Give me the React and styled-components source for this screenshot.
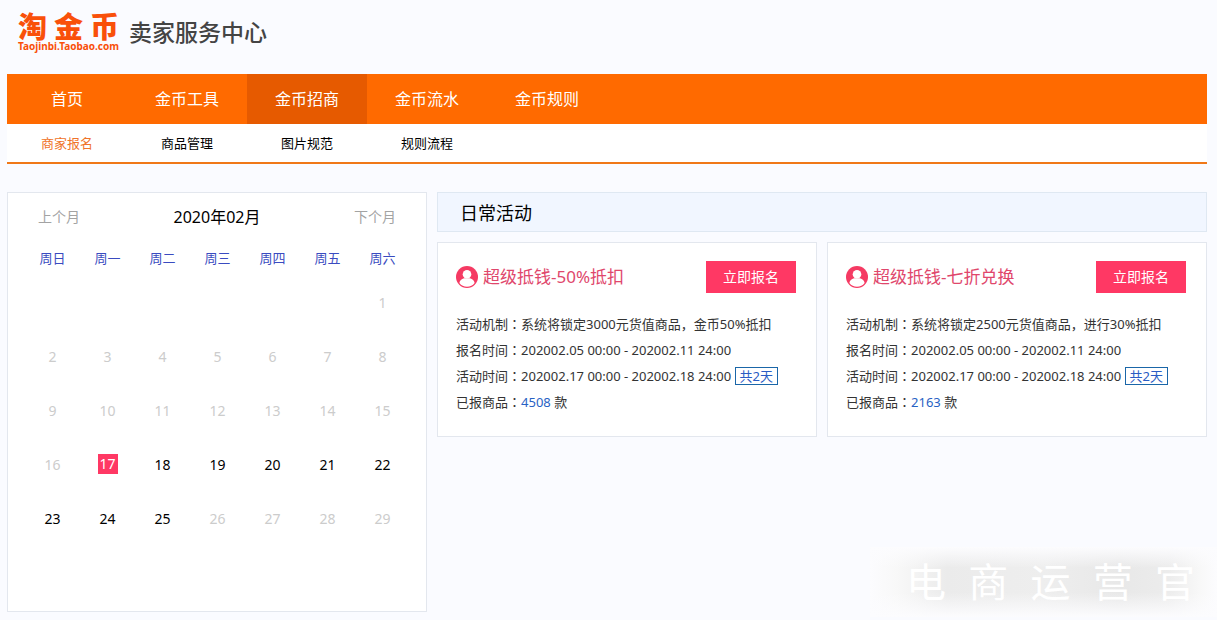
import React from 'react';
import styled, { createGlobalStyle, css } from 'styled-components';

const GlobalStyle = createGlobalStyle`
  *, *::before, *::after { box-sizing: border-box; }
  body {
    margin: 0;
    background: #fafbff;
    color: #000;
    font-family: "Noto Sans", "Noto Sans CJK SC", sans-serif;
    font-size: 13px;
  }
  a { color: inherit; text-decoration: none; }
  h1, h2, h3, p, ul { margin: 0; padding: 0; font-weight: 400; }
  ul { list-style: none; }
  button { font-family: inherit; cursor: pointer; border: 0; padding: 0; background: none; }
`;

const Page = styled.div`
  position: relative;
  padding: 0 10px 8px 7px;
`;

const Header = styled.header`
  display: flex;
  align-items: center;
  gap: 10px;
  height: 74px;
  padding: 0 11px 10px;
`;

const Logo = styled.a`
  display: flex;
  flex-direction: column;
  align-items: center;
  color: #f9500a;
`;

const LogoName = styled.span`
  display: flex;
  gap: 7px;
  font-family: "Noto Sans CJK SC", sans-serif;
  font-size: 29px;
  line-height: 28px;
  font-weight: 900;
`;

const LogoUrl = styled.span`
  font-size: 10px;
  line-height: 14px;
  font-weight: 700;
`;

const SiteTitle = styled.h1`
  padding-bottom: 2px;
  color: #444;
  font-family: "Noto Sans CJK SC", sans-serif;
  font-size: 23px;
  line-height: 32px;
  font-weight: 500;
`;

const MainNav = styled.nav`
  display: flex;
  height: 50px;
  background: #ff6a00;
`;

const NavLink = styled.a`
  display: flex;
  align-items: center;
  justify-content: center;
  width: 120px;
  padding-bottom: 2px;
  color: #fff;
  font-size: 16px;
  background: ${(p) => (p.$active ? '#e65a00' : 'transparent')};
`;

const SubNav = styled.nav`
  display: flex;
  height: 40px;
  background: #fff;
  border-bottom: 2px solid #f07818;
`;

const SubLink = styled.a`
  display: flex;
  align-items: center;
  justify-content: center;
  width: 120px;
  padding-bottom: 2px;
  color: ${(p) => (p.$active ? '#f0742a' : '#000')};
`;

const Main = styled.main`
  display: grid;
  grid-template-columns: 420px 1fr;
  align-items: start;
  gap: 10px;
  margin-top: 28px;
`;

const panel = css`
  background: #fff;
  border: 1px solid #e3e7ee;
`;

const Calendar = styled.section`
  ${panel}
  min-height: 420px;
  padding: 0 16px 0 17px;
`;

const MonthBar = styled.div`
  display: flex;
  align-items: center;
  justify-content: space-between;
  height: 46px;
  padding: 0 14px 0 13px;
`;

const MonthButton = styled.button`
  color: #a3a3a3;
  font-size: 14px;
`;

const MonthTitle = styled.h2`
  font-size: 16px;
`;

const Days = styled.table`
  width: 100%;
  table-layout: fixed;
  border-collapse: collapse;
`;

const Weekday = styled.th`
  height: 36px;
  padding: 0;
  color: #3a4bc0;
  font-weight: 400;
`;

const Day = styled.td`
  height: 54px;
  padding: 0;
  text-align: center;
  font-size: 14px;
  color: ${(p) => (p.$open ? '#000' : '#ccc')};
`;

const Today = styled.span`
  display: inline-block;
  width: 20px;
  line-height: 20px;
  color: #fff;
  background: #ff3864;
`;

const Activities = styled.section`
  display: grid;
  gap: 10px;
`;

const SectionTitle = styled.h2`
  height: 40px;
  padding: 0 22px;
  border: 1px solid #dfe8f2;
  background: #f1f6ff;
  font-size: 18px;
  line-height: 40px;
`;

const Cards = styled.div`
  display: grid;
  grid-template-columns: 1fr 1fr;
  gap: 10px;
`;

const Card = styled.article`
  ${panel}
  padding: 18px 20px 21px 18px;
`;

const CardHead = styled.div`
  display: flex;
  align-items: center;
  height: 32px;
  margin-bottom: 18px;
`;

const CardTitle = styled.h3`
  flex: 1;
  margin-left: 5px;
  color: #e0476c;
  font-size: 17px;
  line-height: 32px;
`;

const SignUp = styled.button`
  width: 90px;
  height: 32px;
  padding-bottom: 2px;
  color: #fff;
  background: #ff3864;
  font-size: 14px;
`;

const Fact = styled.li`
  height: 26px;
  line-height: 26px;
  color: #333;
  white-space: nowrap;
`;

/* The Japanese face centres the full-width colon in its cell. */
const Colon = styled.span`
  font-family: "Noto Sans CJK JP", sans-serif;
`;

const Badge = styled.span`
  display: inline-block;
  padding: 0 4px;
  border: 1px solid #1a66a8;
  color: #2a5cc4;
  line-height: 16px;
`;

const Count = styled.a`
  color: #2862c4;
`;

const Watermark = styled.div`
  position: absolute;
  right: 0;
  bottom: 3px;
  display: flex;
  align-items: center;
  justify-content: space-between;
  width: 347px;
  height: 70px;
  padding: 0 22px 0 36px;
  color: #fff;
  font-size: 40px;
  line-height: 70px;
  pointer-events: none;
  background-image:
    linear-gradient(to bottom, #fcfcfe 0, rgba(252, 252, 254, 0) 30%, rgba(252, 252, 254, 0) 65%, #fcfcfe 100%),
    linear-gradient(to right, #fcfcfe 0, #f8f8f8 8%, #ebebeb 22%, #eeeeee 50%, #e8e8e8 72%, #ececec 86%, #f8f8f8 95%, #fcfcfe 100%);
`;

function UserIcon() {
  return (
    <svg width="22" height="22" viewBox="0 0 22 22" aria-hidden="true">
      <circle cx="11" cy="11" r="11" fill="#f53a63" />
      <circle cx="11" cy="8.300" r="4.300" fill="#fff" />
      <path
        fill="#fff"
        d="M8 12.300h6c2.600.7 4.200 2.200 4.600 4.600A9.600 9.600 0 0 1 11 20.700a9.600 9.600 0 0 1-7.600-3.800c.4-2.400 2-3.900 4.600-4.600z"
      />
    </svg>
  );
}

const NAV = ['首页', '金币工具', '金币招商', '金币流水', '金币规则'];
const SUB_NAV = ['商家报名', '商品管理', '图片规范', '规则流程'];
const WEEKDAYS = ['周日', '周一', '周二', '周三', '周四', '周五', '周六'];
const TODAY = 17;
const LAST_OPEN = 25;
const WEEKS = Array.from({ length: 5 }, (_, w) =>
  Array.from({ length: 7 }, (_, d) => Math.max(0, w * 7 + d - 5))
);
const OFFERS = [
  { title: '超级抵钱-50%抵扣', rule: '系统将锁定3000元货值商品，金币50%抵扣', count: 4508 },
  { title: '超级抵钱-七折兑换', rule: '系统将锁定2500元货值商品，进行30%抵扣', count: 2163 },
];

function FactRow({ label, children }) {
  return (
    <Fact>
      {label}
      <Colon lang="ja">：</Colon>
      {children}
    </Fact>
  );
}

function OfferCard({ offer }) {
  return (
    <Card>
      <CardHead>
        <UserIcon />
        <CardTitle>{offer.title}</CardTitle>
        <SignUp type="button">立即报名</SignUp>
      </CardHead>
      <ul>
        <FactRow label="活动机制">{offer.rule}</FactRow>
        <FactRow label="报名时间">202002.05 00:00 - 202002.11 24:00</FactRow>
        <FactRow label="活动时间">
          202002.17 00:00 - 202002.18 24:00 <Badge>共2天</Badge>
        </FactRow>
        <FactRow label="已报商品">
          <Count href="#items">{offer.count}</Count> 款
        </FactRow>
      </ul>
    </Card>
  );
}

export default function App() {
  return (
    <>
      <GlobalStyle />
      <Page lang="zh-CN">
        <Header>
          <Logo href="#home">
            <LogoName>
              {[...'淘金币'].map((ch) => <span key={ch}>{ch}</span>)}
            </LogoName>
            <LogoUrl>Taojinbi.Taobao.com</LogoUrl>
          </Logo>
          <SiteTitle>卖家服务中心</SiteTitle>
        </Header>
        <MainNav>
          {NAV.map((name) => (
            <NavLink key={name} href="#nav" $active={name === '金币招商'}>{name}</NavLink>
          ))}
        </MainNav>
        <SubNav>
          {SUB_NAV.map((name) => (
            <SubLink key={name} href="#sub" $active={name === '商家报名'}>{name}</SubLink>
          ))}
        </SubNav>
        <Main>
          <Calendar>
            <MonthBar>
              <MonthButton type="button">上个月</MonthButton>
              <MonthTitle>2020年02月</MonthTitle>
              <MonthButton type="button">下个月</MonthButton>
            </MonthBar>
            <Days>
              <thead>
                <tr>{WEEKDAYS.map((d) => <Weekday key={d} scope="col">{d}</Weekday>)}</tr>
              </thead>
              <tbody>
                {WEEKS.map((week, w) => (
                  <tr key={w}>
                    {week.map((day, d) => (
                      <Day key={d} $open={day > TODAY && day <= LAST_OPEN}>
                        {day === TODAY ? <Today>{day}</Today> : day || null}
                      </Day>
                    ))}
                  </tr>
                ))}
              </tbody>
            </Days>
          </Calendar>
          <Activities>
            <SectionTitle>日常活动</SectionTitle>
            <Cards>
              {OFFERS.map((offer) => <OfferCard key={offer.title} offer={offer} />)}
            </Cards>
          </Activities>
        </Main>
        <Watermark>
          {[...'电商运营官'].map((ch) => <span key={ch}>{ch}</span>)}
        </Watermark>
      </Page>
    </>
  );
}
